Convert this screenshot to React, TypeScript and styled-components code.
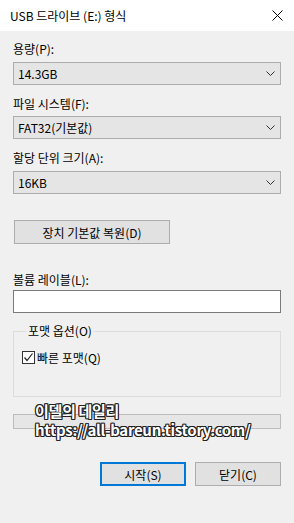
import React from "react";
import styled, { createGlobalStyle } from "styled-components";

const Global = createGlobalStyle`
  html, body { margin: 0; padding: 0; background: #f0f0f0; }
  body { font-family: "Noto Sans CJK KR", "Noto Sans", sans-serif; }
`;

const Window = styled.div`
  position: relative;
  width: 294px;
  height: 523px;
  background: #f0f0f0;
  display: flex;
  flex-direction: column;
  overflow: hidden;
  color: #000;
  font-size: 12px;
`;

const TitleBar = styled.div`
  height: 31px;
  background: #ffffff;
  display: flex;
  align-items: center;
  justify-content: space-between;
  padding: 0 11px 0 10px;
  flex-shrink: 0;
`;

const Title = styled.span`
  font-size: 12px;
  line-height: 16px;
  color: #000;
`;

const Content = styled.div`
  display: flex;
  flex-direction: column;
  padding: 0 13px;
`;

const Label = styled.div<{ $mt: number }>`
  margin-top: ${(p) => p.$mt}px;
  height: 16px;
  line-height: 16px;
  font-size: 12px;
`;

const Combo = styled.div<{ $mt: number }>`
  margin-top: ${(p) => p.$mt}px;
  height: 23px;
  box-sizing: border-box;
  border: 1px solid #adadad;
  background: #e5e5e5;
  display: flex;
  align-items: center;
  justify-content: space-between;
  padding: 0 5px 0 4px;
  font-size: 12px;
`;

const Button = styled.div<{ $primary?: boolean; $width: number }>`
  width: ${(p) => p.$width}px;
  height: 24px;
  box-sizing: border-box;
  border: ${(p) => (p.$primary ? "2px solid #0078d7" : "1px solid #adadad")};
  background: #e1e1e1;
  display: flex;
  align-items: center;
  justify-content: center;
  font-size: 12px;
`;

const ResetRow = styled.div`
  margin-top: 26px;
  padding-left: 1px;
`;

const TextInput = styled.div`
  margin-top: 2px;
  height: 23px;
  box-sizing: border-box;
  border: 1px solid #7a7a7a;
  background: #ffffff;
`;

const Group = styled.fieldset`
  margin: 10px 0 0 0;
  padding: 10px 0 0 8px;
  height: 74px;
  box-sizing: border-box;
  border: 1px solid #dcdcdc;
  min-width: 0;
`;

const Legend = styled.legend`
  padding: 0 2px;
  margin-left: 4px;
  font-size: 12px;
  line-height: 16px;
`;

const CheckRow = styled.div`
  display: flex;
  align-items: center;
  gap: 2px;
  height: 16px;
`;

const Box = styled.span`
  width: 13px;
  height: 13px;
  box-sizing: border-box;
  border: 1px solid #333333;
  background: #ffffff;
  display: inline-flex;
  align-items: center;
  justify-content: center;
`;

const Progress = styled.div`
  margin-top: 17px;
  height: 15px;
  box-sizing: border-box;
  border: 1px solid #bcbcbc;
  background: #e6e6e6;
`;

const Footer = styled.div`
  margin-top: 33px;
  display: flex;
  justify-content: flex-end;
  gap: 9px;
`;

const Watermark = styled.div`
  position: absolute;
  left: 35px;
  top: 401px;
  display: flex;
  flex-direction: column;
  font-family: "Noto Sans CJK KR", "Noto Sans", sans-serif;
  font-weight: 700;
  font-size: 15px;
  line-height: 19px;
  color: #ffffff;
  letter-spacing: -0.3px;
  text-shadow:
    -1px -1px 0 #222, 1px -1px 0 #222, -1px 1px 0 #222, 1px 1px 0 #222,
    0 -1px 0 #222, 0 1px 0 #222, -1px 0 0 #222, 1px 0 0 #222;
`;

const Chevron = () => (
  <svg width="9" height="5" viewBox="0 0 9 5">
    <path d="M0.5 0.5 L4.5 4.5 L8.5 0.5" fill="none" stroke="#333" strokeWidth="1" />
  </svg>
);

const CloseIcon = () => (
  <svg width="11" height="11" viewBox="0 0 11 11">
    <path d="M0.5 0.5 L10.5 10.5 M10.5 0.5 L0.5 10.5" stroke="#000" strokeWidth="1" />
  </svg>
);

const Check = () => (
  <svg width="11" height="11" viewBox="0 0 11 11">
    <path d="M1.5 5.5 L4 8.5 L9.5 1.5" fill="none" stroke="#222" strokeWidth="1.2" />
  </svg>
);

export default function App() {
  return (
    <>
      <Global />
      <Window>
        <TitleBar>
          <Title>USB 드라이브 (E:) 형식</Title>
          <CloseIcon />
        </TitleBar>
        <Content>
          <Label $mt={10}>용량(P):</Label>
          <Combo $mt={5}>
            <span>14.3GB</span>
            <Chevron />
          </Combo>
          <Label $mt={11}>파일 시스템(F):</Label>
          <Combo $mt={4}>
            <span>FAT32(기본값)</span>
            <Chevron />
          </Combo>
          <Label $mt={11}>할당 단위 크기(A):</Label>
          <Combo $mt={5}>
            <span>16KB</span>
            <Chevron />
          </Combo>
          <ResetRow>
            <Button $width={156}>장치 기본값 복원(D)</Button>
          </ResetRow>
          <Label $mt={28}>볼륨 레이블(L):</Label>
          <TextInput />
          <Group>
            <Legend>포맷 옵션(O)</Legend>
            <CheckRow>
              <Box>
                <Check />
              </Box>
              <span>빠른 포맷(Q)</span>
            </CheckRow>
          </Group>
          <Progress />
          <Footer>
            <Button $primary $width={86}>시작(S)</Button>
            <Button $width={86}>닫기(C)</Button>
          </Footer>
        </Content>
        <Watermark>
          <span>이델의 데일리</span>
          <span>https://all-bareun.tistory.com/</span>
        </Watermark>
      </Window>
    </>
  );
}
